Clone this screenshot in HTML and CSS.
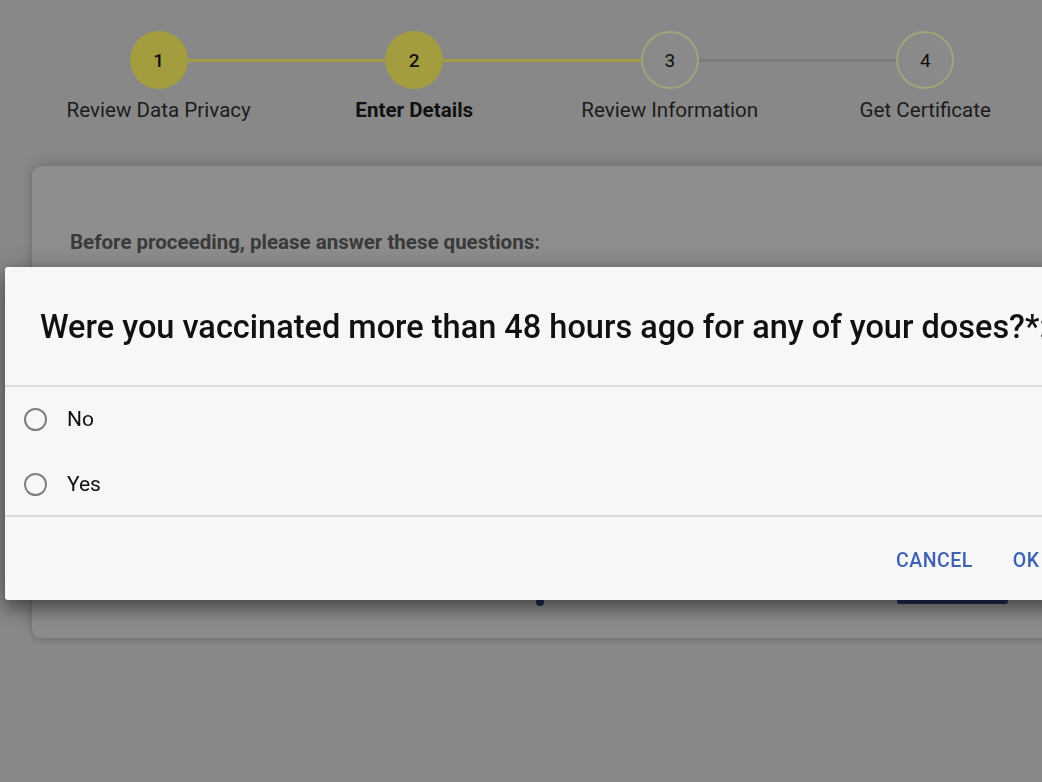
FILE: index.html
```html
<!DOCTYPE html>
<html lang="en">
<head>
<meta charset="utf-8">
<title>Enter Details</title>
<link rel="stylesheet" href="styles.css">
</head>
<body>
<div class="page">
  <div class="stepper">
    <div class="step">
      <div class="track"><span class="seg none"></span><span class="dot done">1</span><span class="seg on"></span></div>
      <div class="label">Review Data Privacy</div>
    </div>
    <div class="step">
      <div class="track"><span class="seg on"></span><span class="dot done">2</span><span class="seg on"></span></div>
      <div class="label active">Enter Details</div>
    </div>
    <div class="step">
      <div class="track"><span class="seg on"></span><span class="dot todo">3</span><span class="seg off"></span></div>
      <div class="label">Review Information</div>
    </div>
    <div class="step">
      <div class="track"><span class="seg off"></span><span class="dot todo">4</span><span class="seg none"></span></div>
      <div class="label">Get Certificate</div>
    </div>
  </div>

  <div class="card">
    <p class="intro">Before proceeding, please answer these questions:</p>
    <div class="card-foot">
      <span class="pager"></span>
      <span class="next-btn"></span>
    </div>
  </div>
</div>

<div class="dialog">
  <div class="dialog-title">Were you vaccinated more than 48 hours ago for any of your doses?*:</div>
  <div class="options">
    <label class="option"><span class="radio"></span><span>No</span></label>
    <label class="option"><span class="radio"></span><span>Yes</span></label>
  </div>
  <div class="actions">
    <span class="action">CANCEL</span>
    <span class="action">OK</span>
  </div>
</div>
</body>
</html>
```
FILE: styles.css
```css
* { box-sizing: border-box; }
html, body {
  margin: 0;
  height: 100%;
  overflow: hidden;
}
body {
  background: #888888;
  font-family: Roboto, "Liberation Sans", Arial, sans-serif;
  color: #1a1a1a;
}
.page {
  width: 1100px;
}
.stepper {
  display: grid;
  grid-template-columns: repeat(4, 255.5px);
  margin-left: 31px;
  padding-top: 31px;
}
.step {
  display: flex;
  flex-direction: column;
  align-items: center;
}
.track {
  display: flex;
  align-items: center;
  width: 100%;
}
.seg {
  flex: 1;
  height: 3px;
}
.seg.on { background: #a39c45; }
.seg.off { background: #7b7b7b; }
.seg.none { background: transparent; }
.dot {
  width: 58px;
  height: 58px;
  border-radius: 50%;
  display: flex;
  align-items: center;
  justify-content: center;
  font-size: 19px;
  color: #111;
  flex: none;
}
.dot.done {
  background: #a49d3f;
  font-weight: 500;
}
.dot.todo {
  border: 2px solid #a3a27a;
  background: #8a8a8a;
}
.label {
  margin-top: 9px;
  font-size: 20.6px;
  line-height: 24px;
  color: #1c1c1c;
  white-space: nowrap;
}
.label.active {
  font-weight: 700;
  color: #111;
}
.card {
  margin: 44px 0 0 32px;
  height: 472px;
  background: linear-gradient(#8e8e8e, #8b8b8b);
  border-radius: 10px;
  box-shadow: 0 -4px 14px rgba(0,0,0,0.12), 0 2px 6px rgba(0,0,0,0.15);
  padding: 64px 0 34px 38px;
  display: flex;
  flex-direction: column;
}
.intro {
  margin: 0;
  font-size: 20.5px;
  line-height: 24px;
  font-weight: 700;
  color: #3a3a3a;
}
.card-foot {
  margin-top: auto;
  display: flex;
  align-items: flex-end;
  height: 40px;
}
.pager {
  width: 8px;
  height: 8px;
  border-radius: 50%;
  background: #1f2a55;
  margin-left: 466px;
  margin-bottom: -2px;
}
.next-btn {
  width: 111px;
  height: 40px;
  background: #1f2a55;
  border-radius: 3px;
  margin-left: 353px;
}
.dialog {
  position: fixed;
  left: 5px;
  top: 267px;
  width: 1060px;
  height: 333px;
  background: #f7f7f9;
  border-radius: 3px;
  box-shadow: 0 10px 18px rgba(0,0,0,0.38), 0 0 22px rgba(0,0,0,0.22);
  display: flex;
  flex-direction: column;
}
.dialog-title {
  height: 120px;
  flex: none;
  display: flex;
  align-items: center;
  padding: 2px 0 0 35px;
  font-size: 32.5px;
  font-weight: 500;
  color: #111;
  white-space: nowrap;
  border-bottom: 2px solid #dadadc;
}
.options {
  display: flex;
  flex-direction: column;
  gap: 3px;
  padding: 1px 0 0 19px;
  border-bottom: 2px solid #dadadc;
}
.option {
  height: 62px;
  display: flex;
  align-items: center;
  gap: 20px;
  font-size: 21px;
  color: #111;
}
.radio {
  width: 23px;
  height: 23px;
  border-radius: 50%;
  border: 2px solid #7f7f7f;
}
.actions {
  flex: 1;
  display: flex;
  align-items: center;
  padding: 4px 0 0 883px;
  gap: 24px;
}
.action {
  padding: 0 8px;
  font-size: 19.5px;
  font-weight: 500;
  letter-spacing: 0.5px;
  color: #3d62b3;
}
```
